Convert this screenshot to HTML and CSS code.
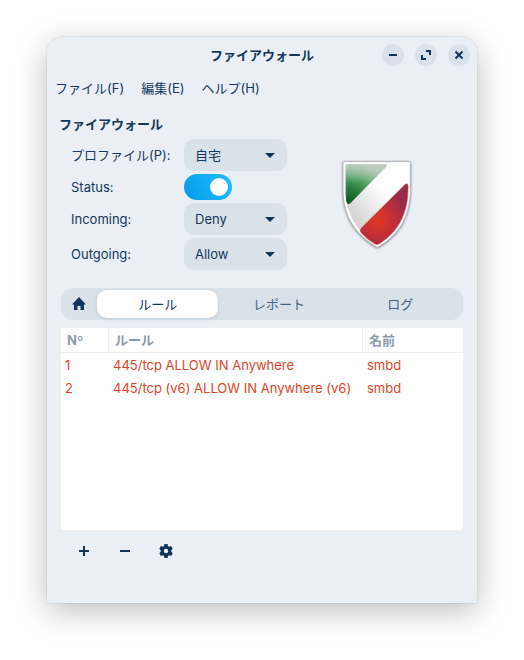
FILE: index.html
```html
<!DOCTYPE html>
<html lang="ja">
<head>
    <meta charset="UTF-8">
    <meta name="viewport" content="width=device-width, initial-scale=1.0">
    <title>ファイアウォール</title>
    <link rel="stylesheet" href="styles.css">
</head>
<body>

    <div class="window">
        <header class="titlebar">
            <h1>ファイアウォール</h1>
            <div class="window-buttons">
                <button class="window-btn" aria-label="最小化">
                    <svg width="22" height="22" viewBox="0 0 22 22"><path d="M7 10h8v2H7z"/></svg>
                </button>
                <button class="window-btn" aria-label="最大化">
                    <svg width="22" height="22" viewBox="0 0 22 22"><path d="M11 6h5v5h-2V8h-3zM6 11h2v3h3v2H6z"/></svg>
                </button>
                <button class="window-btn" aria-label="閉じる">
                    <svg width="22" height="22" viewBox="0 0 22 22"><path class="stroke" d="M7.500 7.500l7 7M14.500 7.500l-7 7"/></svg>
                </button>
            </div>
        </header>

        <nav class="menubar">
            <button>ファイル(F)</button>
            <button>編集(E)</button>
            <button>ヘルプ(H)</button>
        </nav>

        <main class="content">
            <h2>ファイアウォール</h2>

            <div class="settings">
                <div class="form">
                    <label for="profile">プロファイル(P):</label>
                    <select id="profile"><option>自宅</option></select>

                    <label for="status">Status:</label>
                    <input type="checkbox" id="status" class="switch" checked>

                    <label for="incoming">Incoming:</label>
                    <select id="incoming"><option>Deny</option></select>

                    <label for="outgoing">Outgoing:</label>
                    <select id="outgoing"><option>Allow</option></select>
                </div>

                <svg class="shield" width="74" height="92" viewBox="44 38 222 276" aria-hidden="true">
                    <defs>
                        <linearGradient id="silver" x1="0" y1="1" x2="1" y2="0">
                            <stop offset="0.25" stop-color="#d6d6d6"/>
                            <stop offset="0.65" stop-color="#ffffff"/>
                        </linearGradient>
                        <radialGradient id="green" gradientUnits="userSpaceOnUse" cx="68" cy="170" r="125">
                            <stop offset="0" stop-color="#08561a"/>
                            <stop offset="0.35" stop-color="#287c3b"/>
                            <stop offset="0.65" stop-color="#57a66b"/>
                            <stop offset="1" stop-color="#a9c4ae"/>
                        </radialGradient>
                        <linearGradient id="shine" x1="0" y1="0" x2="0" y2="1">
                            <stop offset="0" stop-color="#c9d3ca" stop-opacity="0.7"/>
                            <stop offset="0.45" stop-color="#c9d3ca" stop-opacity="0"/>
                        </linearGradient>
                        <radialGradient id="red" gradientUnits="userSpaceOnUse" cx="158" cy="222" r="90">
                            <stop offset="0" stop-color="#e03a20"/>
                            <stop offset="0.5" stop-color="#c52f35"/>
                            <stop offset="1" stop-color="#982a4d"/>
                        </radialGradient>
                        <filter id="shadow" x="-10%" y="-10%" width="120%" height="120%">
                            <feDropShadow dx="0" dy="2" stdDeviation="3" flood-color="#000" flood-opacity="0.6"/>
                        </filter>
                    </defs>
                    <path filter="url(#shadow)" fill="#fff" stroke="#a5a5a5" stroke-width="2" d="M57 46H253Q255 46 255 50V128C255 212 221 266 156 303C91 266 53 212 53 128V50Q53 46 57 46Z"/>
                    <path fill="url(#silver)" d="M60 53H248V128C248 207 216 258 156 294C97 258 60 207 60 128Z"/>
                    <path fill="url(#green)" d="M68 54H180Q188 55 182 62L75 171Q66 178 63 165C61 151 61 137 61 61Q61 54 68 54Z"/>
                    <path fill="url(#shine)" d="M68 54H180Q188 55 182 62L75 171Q66 178 63 165C61 151 61 137 61 61Q61 54 68 54Z"/>
                    <path fill="url(#red)" stroke="#dc4247" stroke-width="2" d="M240 114Q247 109 248 118C250 204 215 259 162 292Q156 296 149 293Q126 280 108 260Q101 252 109 244Z"/>
                </svg>
            </div>

            <div class="tabs" role="tablist">
                <button class="tab home" role="tab" aria-label="ホーム">
                    <svg width="16" height="16" viewBox="0 0 16 16"><path d="M8 1L15 8.500H13V14H9.500V10H6.500V14H3V8.500H1Z"/></svg>
                </button>
                <button class="tab active" role="tab" aria-selected="true">ルール</button>
                <button class="tab" role="tab">レポート</button>
                <button class="tab" role="tab">ログ</button>
            </div>

            <div class="rules">
                <table>
                    <thead>
                        <tr><th class="col-number">Nº</th><th>ルール</th><th class="col-name">名前</th></tr>
                    </thead>
                    <tbody>
                        <tr><td>1</td><td>445/tcp ALLOW IN Anywhere</td><td>smbd</td></tr>
                        <tr><td>2</td><td>445/tcp (v6) ALLOW IN Anywhere (v6)</td><td>smbd</td></tr>
                    </tbody>
                </table>
            </div>

            <div class="toolbar">
                <button aria-label="ルールを追加">
                    <svg width="16" height="16" viewBox="0 0 16 16"><path d="M7 3h2v4h4v2H9v4H7V9H3V7h4z"/></svg>
                </button>
                <button aria-label="ルールを削除">
                    <svg width="16" height="16" viewBox="0 0 16 16"><path d="M3 7h10v2H3z"/></svg>
                </button>
                <button aria-label="設定">
                    <svg width="16" height="16" viewBox="0 0 16 16"><path fill-rule="evenodd" d="M6.500 1h3l.5 2 1.200.7 2-.6 1.500 2.600L13.300 7.200v1.600l1.400 1.500-1.500 2.600-2-.6-1.200.7-.5 2h-3L6 13l-1.200-.7-2 .6-1.500-2.600L2.700 8.800V7.200L1.300 5.700l1.500-2.600 2 .6L6 3zM8 5.800a2.200 2.200 0 1 0 0 4.400a2.200 2.200 0 1 0 0-4.400z"/></svg>
                </button>
            </div>
        </main>
    </div>

</body>
</html>
```
FILE: styles.css
```css
* {
    box-sizing: border-box;
}

body {
    display: flex;
    min-height: 100vh;
    margin: 0;
    padding: 37px 47px 57px;
    background-color: #fff;
    color: #15375a;
    font-family: Inter, "Noto Sans CJK JP", sans-serif;
    font-size: 13px;
    line-height: 20px;
}

button, select {
    border: none;
    background: none;
    padding: 0;
    color: inherit;
    font: inherit;
}

svg {
    display: block;
    fill: #12345a;
}

.window {
    flex: 1;
    display: flex;
    flex-direction: column;
    background-color: #eaeff6;
    border-radius: 16px 16px 0 0;
    box-shadow: 0 0 1px 1px rgba(0, 0, 0, 0.06), 0 8px 32px rgba(0, 0, 0, 0.26);
}

/* Title bar */
.titlebar {
    display: grid;
    grid-template-columns: 1fr auto 1fr;
    align-items: center;
    height: 36px;
    padding: 0 7px;
}

h1, h2 {
    margin: 0;
    font-size: 13px;
    font-weight: bold;
}

.titlebar h1 {
    grid-column: 2;
}

.window-buttons {
    display: flex;
    justify-content: flex-end;
    gap: 11px;
}

.window-btn {
    border-radius: 50%;
    background-color: #dae1ea;
}

.stroke {
    fill: none;
    stroke: #12345a;
    stroke-width: 2;
}

.menubar {
    display: flex;
    gap: 17px;
    height: 30px;
    padding: 0 8px;
}

/* Settings form */
.content {
    flex: 1;
    display: flex;
    flex-direction: column;
    padding: 0 14px;
}

.content h2 {
    margin: 11px -2px 5px;
}

.settings {
    display: flex;
    align-items: center;
    gap: 4px;
}

.form {
    display: grid;
    grid-template-columns: 113px 103px;
    row-gap: 3px;
    align-items: center;
    padding-left: 10px;
}

select {
    width: 100%;
    height: 32px;
    padding: 0 11px;
    border-radius: 10px;
    appearance: none;
    background: #dae2e9 url("data:image/svg+xml,%3Csvg xmlns='http://www.w3.org/2000/svg' width='10' height='5'%3E%3Cpath d='M0 0h10L5 5z' fill='%2312345a'/%3E%3C/svg%3E") no-repeat right 12px center;
}

.switch {
    width: 48px;
    height: 26px;
    margin: 0;
    padding: 4px;
    border-radius: 13px;
    appearance: none;
    background: linear-gradient(60deg, #0599ea, #20c0fb);
}

.switch::before {
    content: "";
    display: block;
    width: 18px;
    height: 18px;
    border-radius: 50%;
    background-color: #fff;
}

.switch:checked::before {
    margin-left: auto;
}

.shield {
    margin: 0 auto;
}

/* Tabs */
.tabs {
    display: flex;
    height: 32px;
    margin-top: 18px;
    padding: 2px;
    border-radius: 12px;
    background-color: #dae2e9;
}

.tab {
    flex: 1;
    border-radius: 10px;
    color: #45617e;
}

.tab.home {
    flex: 0 0 34px;
    padding-left: 8px;
}

.tab.active {
    background-color: #fff;
    color: #15375a;
    box-shadow: 0 1px 4px rgba(18, 52, 90, 0.12);
}

/* Rule list */
.rules {
    flex: 1;
    margin-top: 8px;
    background-color: #fff;
}

table {
    width: 100%;
    border-spacing: 0;
    table-layout: fixed;
}

th {
    height: 25px;
    padding: 0 6px;
    border-right: 1px solid #eaeff6;
    border-bottom: 1px solid #eaeff6;
    color: #8b9bad;
    text-align: left;
    font-weight: bold;
}

th:last-child {
    border-right: none;
}

.col-number {
    width: 48px;
}

.col-name {
    width: 100px;
}

td {
    height: 23px;
    padding: 0 4px;
    color: #dd4628;
    white-space: nowrap;
}

.toolbar {
    display: flex;
    gap: 25px;
    height: 73px;
    padding: 13px 15px;
    align-items: flex-start;
}
```
